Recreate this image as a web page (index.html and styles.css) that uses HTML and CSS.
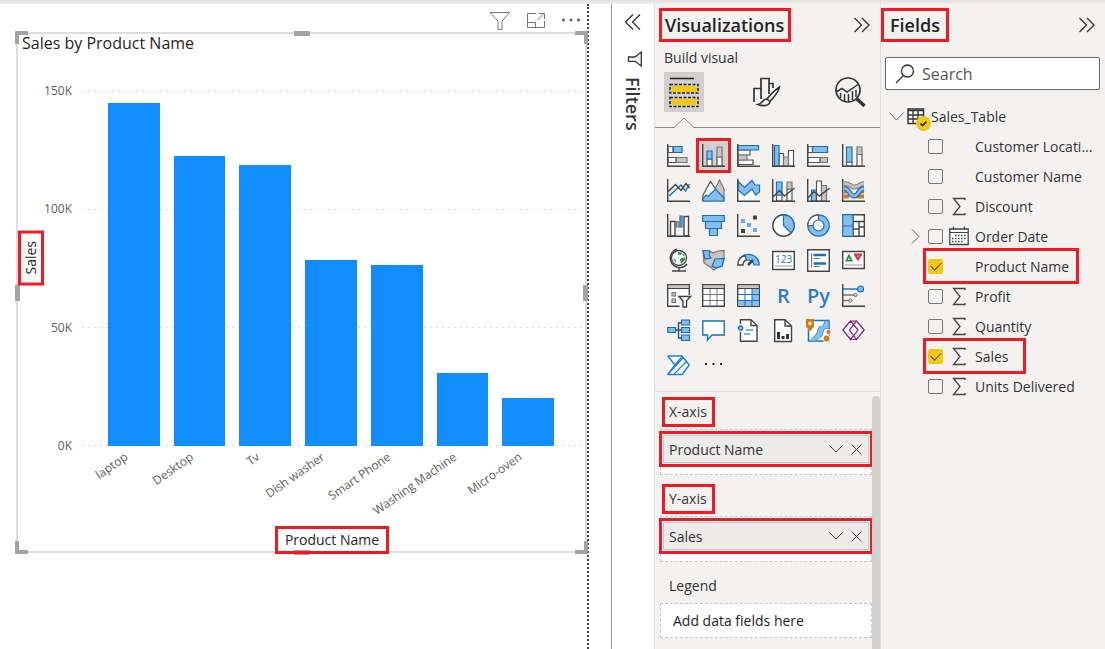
FILE: index.html
```html
<!DOCTYPE html>
<html lang="en">
<head>
    <meta charset="UTF-8">
    <meta name="viewport" content="width=device-width, initial-scale=1.0">
    <title>Sales by Product Name</title>
    <link rel="stylesheet" href="styles.css">
</head>
<body>

    <div class="ribbon-edge"></div>

    <div class="workspace">

        <!-- report canvas -->
        <main class="canvas">
            <div class="report-page">
                <div class="visual-header">
                    <button type="button" aria-label="Filters"><svg width="22" height="20" viewBox="0 0 22 20"><path d="M1 1.500H20.500L13 10V18.500H9V10Z" fill="none" stroke="#777"/></svg></button>
                    <button type="button" aria-label="Focus mode"><svg width="20" height="20" viewBox="0 0 20 20"><path d="M10 2.500H1.500V16.500H18.500V10M1.500 11.500H9.500V16.500M11.500 9L18 2.500M12.500 2.500H18.500V8" fill="none" stroke="#777"/></svg></button>
                    <button type="button" aria-label="More options"><svg width="20" height="20" viewBox="0 0 20 20"><g fill="#666"><circle cx="2.500" cy="9" r="1.600"/><circle cx="10" cy="9" r="1.600"/><circle cx="17.500" cy="9" r="1.600"/></g></svg></button>
                </div>

                <section class="visual">
                    <h2 class="visual-title">Sales by Product Name</h2>
                    <span class="handle tl"></span><span class="handle tc"></span><span class="handle tr"></span>
                    <span class="handle ml"></span><span class="handle mr"></span>
                    <span class="handle bl"></span><span class="handle bc"></span><span class="handle br"></span>
                    <div class="chart">
                        <div class="y-title"><span class="marked">Sales</span></div>
                        <div class="y-ticks">
                            <span>150K</span>
                            <span>100K</span>
                            <span>50K</span>
                            <span>0K</span>
                        </div>
                        <div class="plot">
                            <div class="gridlines"><i></i><i></i><i></i><i></i></div>
                            <div class="bars">
                                <div class="col"><div class="bar" style="height: 96.6%"></div><span class="label">laptop</span></div>
                                <div class="col"><div class="bar" style="height: 81.7%"></div><span class="label">Desktop</span></div>
                                <div class="col"><div class="bar" style="height: 79.2%"></div><span class="label">Tv</span></div>
                                <div class="col"><div class="bar" style="height: 52.3%"></div><span class="label">Dish washer</span></div>
                                <div class="col"><div class="bar" style="height: 50.9%"></div><span class="label">Smart Phone</span></div>
                                <div class="col"><div class="bar" style="height: 20.5%"></div><span class="label">Washing Machine</span></div>
                                <div class="col"><div class="bar" style="height: 13.5%"></div><span class="label">Micro-oven</span></div>
                            </div>
                        </div>
                        <div class="x-title"><span class="marked">Product Name</span></div>
                    </div>
                </section>
            </div>
        </main>

        <!-- collapsed filters pane -->
        <aside class="filters">
            <button type="button" aria-label="Expand filters"><svg width="18" height="18" viewBox="0 0 18 18"><path d="M9 1.500L1.500 9L9 16.500M16 1.500L8.500 9L16 16.500" fill="none" stroke="#333" stroke-width="1.300"/></svg></button>
            <svg class="funnel" width="16" height="16" viewBox="0 0 16 16"><path d="M14.300 1V15L8 10.300H1.500V6H8Z" fill="none" stroke="#333" stroke-width="1.300"/></svg>
            <span class="filters-title">Filters</span>
        </aside>

        <!-- visualizations pane -->
        <aside class="pane viz">
            <header class="pane-header">
                <h1 class="marked">Visualizations</h1>
                <button type="button" aria-label="Collapse visualizations"><svg width="18" height="16" viewBox="0 0 18 16"><path d="M1.500 1L8.500 8L1.500 15M9 1L16 8L9 15" fill="none" stroke="#333" stroke-width="1.300"/></svg></button>
            </header>
            <p class="subtitle">Build visual</p>
            <div class="tabs">
                <button type="button" class="tab active" aria-label="Build visual">
                    <svg width="32" height="32" viewBox="0 0 32 32"><path d="M2 2.500H26" stroke="#222" stroke-width="1.500"/><path fill="#f2c811" d="M3.500 10H28.500V16H3.500ZM3.500 23H28.500V29H3.500Z"/><path d="M2 8.500H30V17H2ZM2 21.500H30V30.500H2Z" fill="none" stroke="#222" stroke-width="1.500" stroke-dasharray="3 1.500"/></svg>
                </button>
                <button type="button" class="tab" aria-label="Format visual">
                    <svg width="32" height="32" viewBox="0 0 32 32"><path d="M3 26V12.500H10V23M10 12.500V2.500H18V18M18 7.500H22V12" fill="none" stroke="#333" stroke-width="1.700"/><path d="M28.500 11C25 13 18 20 16 23L19 25.500C22 22.500 28 15 28.500 11ZM16 23C12 22.500 12.500 27 7 28.500C12 30.500 18.500 30 19 25.500" fill="#f3f2f1" stroke="#333" stroke-width="1.600"/></svg>
                </button>
                <button type="button" class="tab" aria-label="Analytics">
                    <svg width="34" height="32" viewBox="0 0 34 32"><circle cx="15" cy="14" r="12" fill="none" stroke="#333" stroke-width="1.700"/><path d="M3 16L9 12.500L14 16L25 8.500M7.500 17V22M11.500 18V25M15.500 18V26M19.500 15V24.500M23 14V21" fill="none" stroke="#333" stroke-width="1.500"/><path d="M23.500 22.500L31.500 30" stroke="#333" stroke-width="3.500"/></svg>
                </button>
            </div>
            <div class="tab-line"><svg width="24" height="12" viewBox="0 0 24 12"><path d="M1 10.500H2L12 1L22 10.500H23" fill="#f3f2f1" stroke="#888"/><path d="M3 11H21" stroke="#f3f2f1" stroke-width="2"/></svg></div>

            <div class="gallery">
                <button type="button" aria-label="Stacked bar chart"><svg viewBox="0 0 23 23"><path class="w" d="M1 2.500H6V8.500H1ZM1 13.500H9V18.500H1Z"/><path class="b" d="M6.500 2.500H15V8.500H6.500Z"/><path class="g" d="M9.500 13.500H20V18.500H9.500Z"/><path class="k" d="M.7 0V22.300H23"/></svg></button>
                <button type="button" class="marked picked" aria-label="Stacked column chart"><svg viewBox="0 0 23 23"><path class="w" d="M5 15H10V22H5ZM15 13H20V22H15Z"/><path class="b" d="M5 7H10V15H5Z"/><path class="g" d="M15 3H20V13H15Z"/><path class="k" d="M.7 0V22.300H23"/></svg></button>
                <button type="button" aria-label="Clustered bar chart"><svg viewBox="0 0 23 23"><path class="w" d="M1 6H13V11H1ZM1 16H16V20.500H1Z"/><path class="g" d="M1 11H10V16H1Z"/><path class="b" d="M1 1.500H21.500V6H1Z"/><path class="k" d="M.7 0V22.300H23"/></svg></button>
                <button type="button" aria-label="Clustered column chart"><svg viewBox="0 0 23 23"><path class="w" d="M7 9.500H11.500V22H7ZM16.500 6.500H21.500V22H16.500Z"/><path class="g" d="M11.500 13H16.500V22H11.500Z"/><path class="b" d="M2.500 1.500H7V22H2.500Z"/><path class="k" d="M.7 0V22.300H23"/></svg></button>
                <button type="button" aria-label="100% stacked bar chart"><svg viewBox="0 0 23 23"><path class="w" d="M1 2.500H5.500V8.500H1ZM1 13.500H13V18.500H1Z"/><path class="b" d="M5.500 2.500H20.500V8.500H5.500Z"/><path class="g" d="M13.500 13.500H20.500V18.500H13.500Z"/><path class="k" d="M.7 0V22.300H23"/></svg></button>
                <button type="button" aria-label="100% stacked column chart"><svg viewBox="0 0 23 23"><path class="w" d="M4.500 18H10V22H4.500ZM15 10.500H20V22H15Z"/><path class="b" d="M4.500 3H10V18H4.500Z"/><path class="g" d="M15 3H20V10.500H15Z"/><path class="k" d="M.7 0V22.300H23"/></svg></button>

                <button type="button" aria-label="Line chart"><svg viewBox="0 0 23 23"><path class="bl" d="M2 17L14 6L18.500 12L22.500 5"/><path class="kl" d="M1 12.500L8.500 5.500L14 11.500L19 4.500L22.500 9"/><path class="k" d="M.7 0V22.300H23"/></svg></button>
                <button type="button" aria-label="Area chart"><svg viewBox="0 0 23 23"><path class="g" d="M12 12L17.500 1L22 10V22H12Z"/><path class="w" d="M1 16L8.500 2.500L15 12L10 22H1Z"/><path class="b" d="M1 22V19.500L4 16L6 17.500L13.500 10L22 19V22Z"/></svg></button>
                <button type="button" aria-label="Stacked area chart"><svg viewBox="0 0 23 23"><path fill="#fff" d="M1 10L7 16L15 10L22 15V22H1Z"/><path class="b" d="M1 2.500L7.500 8.500L15 1.500L18 6H22.500V13L18.500 16L15 10L7.500 16.500L1 11Z"/><path class="k" d="M.7 0V22.300H23"/></svg></button>
                <button type="button" aria-label="Line and stacked column chart"><svg viewBox="0 0 23 23"><path class="w" d="M4.500 16H10V22H4.500ZM15 10H20V22H15Z"/><path class="b" d="M4.500 3H10V16H4.500Z"/><path class="g" d="M15 3H20V10H15Z"/><path class="kl" d="M1 18L7.500 11.500L12.500 17L22.500 9"/><path class="k" d="M.7 0V22.300H23"/></svg></button>
                <button type="button" aria-label="Line and clustered column chart"><svg viewBox="0 0 23 23"><path class="b" d="M4.500 11H9.500V22H4.500Z"/><path class="w" d="M9.500 2H14.500V22H9.500Z"/><path class="g" d="M14.500 6.500H19.500V22H14.500Z"/><path class="kl" d="M1 19L7 12.500L12.500 17L22.500 9"/><path class="k" d="M.7 0V22.300H23"/></svg></button>
                <button type="button" aria-label="Ribbon chart"><svg viewBox="0 0 23 23"><path d="M2 12.500H7M15 17.500H22M2 17.500H7M15 12.500H22" fill="none" stroke="#d07a1a" stroke-width="4"/><path d="M2 4.500C9 4.500 8 8.500 13 8S18 4.500 22 4.500" fill="none" stroke="#8a8a8a" stroke-width="5"/><path d="M2 4.500C9 4.500 8 8.500 13 8S18 4.500 22 4.500" fill="none" stroke="#c8c6c4" stroke-width="2.500"/><path d="M2 9.500C8 9.500 7 17 12 17S16 10 22 9.500" fill="none" stroke="#1b6fb8" stroke-width="5"/><path d="M2 9.500C8 9.500 7 17 12 17S16 10 22 9.500" fill="none" stroke="#83beec" stroke-width="2.500"/><path class="k" d="M.7 0V22.300H23"/></svg></button>

                <button type="button" aria-label="Waterfall chart"><svg viewBox="0 0 23 23"><path class="w kk" d="M3.500 7.500H8V22H3.500ZM17 2.500H21.500V22H17Z"/><path class="g" d="M9.500 7.500H12V13H9.500Z"/><path class="b" d="M13 2H15V13H13Z"/><path class="k" d="M.7 0V22.300H23"/></svg></button>
                <button type="button" aria-label="Funnel chart"><svg viewBox="0 0 23 23"><path class="b" d="M.7 1.500H22.300V7.500H.7ZM3.500 7.500H19.500V14.500H3.500ZM7.500 14.500H15.500V21.500H7.500Z"/></svg></button>
                <button type="button" aria-label="Scatter chart"><svg viewBox="0 0 23 23"><path fill="#6aade4" d="M4 5H8V9H4ZM10 9H14V13H10ZM16 14H20V18H16Z"/><path fill="#444" d="M16 1.500H20V5.500H16ZM4 15H8V19H4Z"/><path class="k" d="M.7 0V22.300H23"/></svg></button>
                <button type="button" aria-label="Pie chart"><svg viewBox="0 0 23 23"><circle class="w kk" cx="11.500" cy="11.500" r="10.700"/><path class="b" d="M11.500 11.500V.8A10.700 10.700 0 0 1 19 19Z"/></svg></button>
                <button type="button" aria-label="Donut chart"><svg viewBox="0 0 23 23"><circle class="b" cx="11.500" cy="11.500" r="10.700"/><path class="w" d="M11.500 11.500V.8A10.700 10.700 0 0 0 .8 11.500Z"/><circle cx="11.500" cy="11.500" r="5.500" fill="#f3f2f1" stroke="#1b6fb8" stroke-width="1.200"/></svg></button>
                <button type="button" aria-label="Treemap"><svg viewBox="0 0 23 23"><path class="w kk" d="M11 .7H22.300V22.300H11ZM11 7.500H22M11 15H17M17 7.500V22M17 13H22"/><path class="b" d="M.7 .7H11V12H.7ZM.7 12H11V22.300H.7Z"/></svg></button>

                <button type="button" aria-label="Map"><svg viewBox="0 0 23 23"><circle cx="12" cy="9" r="7.500" fill="#fff" stroke="#444" stroke-width="1.300"/><path fill="#2e8b4a" d="M11 3L15 3.500L14 6L11 5.500ZM13 10L17.500 8L18 11L14 15ZM15.500 4L18 6L16 7ZM6 9L9 11L9 14Z"/><path class="kl" d="M10 0A9.500 9.500 0 0 0 14 18.500Q18 18 20 15M12 18V22M5 22H19"/></svg></button>
                <button type="button" aria-label="Filled map"><svg viewBox="0 0 23 23"><path class="g" d="M1 1.500L8 2L11 4L16 2L22 1.500L22 10L20 17L14 19L12 21L8 18L2 14Z"/><path class="b" d="M1 1.500L8 2L7 6L9 9L3 10ZM13 10L22 9.500L20 17L14 19L10 17Z"/></svg></button>
                <button type="button" aria-label="Gauge"><svg viewBox="0 0 23 23"><path class="w kk" d="M.8 16A10.700 10.700 0 0 1 8 6L9.500 11Q6 12 6 16Z"/><path class="b" d="M8 6A10.700 10.700 0 0 1 22.300 16H17Q16 11 9.500 11Z"/><path d="M11 16L16 11" stroke="#444" stroke-width="2.500"/></svg></button>
                <button type="button" aria-label="Card"><svg viewBox="0 0 23 23"><path class="w kk" d="M.7 2.500H22.300V20.500H.7Z"/><text x="3" y="14" class="digits">123</text><path d="M3 17H20" stroke="#999"/></svg></button>
                <button type="button" aria-label="Multi-row card"><svg viewBox="0 0 23 23"><path class="w kk" d="M.7 .7H22.300V22.300H.7Z"/><path d="M6.500 6H19M6.500 14.500H19" stroke="#1b6fb8" stroke-width="2.500"/><path d="M4.500 4V18.500M6.500 9.500H13M6.500 17.500H13" stroke="#777"/></svg></button>
                <button type="button" aria-label="KPI"><svg viewBox="0 0 23 23"><path class="w kk" d="M.7 2.500H22.300V19.500H.7Z"/><path fill="#2e8b4a" d="M3 12.500L7 4.500L11 12.500Z"/><path fill="#d9303a" d="M11.500 4.500H20.500L16 12.500Z"/><path fill="#fff" d="M6 11L7 8.500L8 11ZM15 6.500H17L16 8.500Z"/><path d="M3 16H20" stroke="#999"/></svg></button>

                <button type="button" aria-label="Slicer"><svg viewBox="0 0 23 23"><path class="w kk" d="M.7 .7H22.300V22.300H.7Z"/><path fill="#c8c6c4" stroke="#444" d="M.7 .7H22.300V4.500H.7Z"/><path class="g" d="M5 8.500H8.500V12H5ZM5 15H8.500V18.500H5Z"/><path d="M10 11H24V24H13Z" fill="#f3f2f1"/><path class="w kk" d="M12 12.500H23.500L19.500 17V23H16V17Z"/></svg></button>
                <button type="button" aria-label="Table"><svg viewBox="0 0 23 23"><path class="w kk" d="M.7 .7H22.300V22.300H.7Z"/><path fill="none" stroke="#777" d="M1 10.500H22M1 16.500H22M8 5V22M15 5V22"/><path fill="#c8c6c4" stroke="#444" d="M.7 .7H22.300V4.500H.7Z"/></svg></button>
                <button type="button" aria-label="Matrix"><svg viewBox="0 0 23 23"><path class="w kk" d="M.7 .7H22.300V22.300H.7Z"/><path fill="#83beec" d="M15 5H22V22H1V16.500H15Z"/><path fill="none" stroke="#1b6fb8" d="M1 10.500H22M1 16.500H22M8 5V22M15 5V22"/><path fill="#c8c6c4" stroke="#444" d="M.7 .7H22.300V4.500H.7Z"/></svg></button>
                <button type="button" class="script" aria-label="R script visual">R</button>
                <button type="button" class="script" aria-label="Python visual">Py</button>
                <button type="button" aria-label="Key influencers"><svg viewBox="0 0 23 23"><path class="bl" d="M1 5H15"/><circle class="b" cx="18.500" cy="5" r="3"/><path d="M1 11H12M1 16.500H7" stroke="#777" stroke-width="1.300"/><circle cx="13.500" cy="11" r="1.600" fill="#ccc" stroke="#777"/><circle cx="8.500" cy="16.500" r="1.600" fill="#ccc" stroke="#777"/><path class="k" d="M.7 0V22.300H23"/></svg></button>

                <button type="button" aria-label="Decomposition tree"><svg viewBox="0 0 23 23"><path class="kl" d="M9 11H14M14 4H11.500V19H14"/><path class="b" d="M.7 8.500H8.500V13.500H.7ZM14.500 1H22.500V6H14.500ZM14.500 8.500H22.500V13.500H14.500ZM14.500 16H22.500V21.500H14.500Z"/></svg></button>
                <button type="button" aria-label="Q&amp;A"><svg viewBox="0 0 23 23"><path d="M.8 2H22.200V16H10L5.500 21V16H.8Z" fill="#fff" stroke="#1b6fb8" stroke-width="1.400"/></svg></button>
                <button type="button" aria-label="Smart narrative"><svg viewBox="0 0 23 23"><path class="w kk" d="M3.500 .7H14L20 6.500V22.300H3.500Z"/><path class="kl" d="M14 1V6.500H20"/><circle cx="3.500" cy="9" r="4" fill="#f3f2f1"/><circle class="b" cx="3.500" cy="9" r="2.200"/><path d="M9 11H16M7 15H13" stroke="#4a98da" stroke-width="1.500"/></svg></button>
                <button type="button" aria-label="Paginated report"><svg viewBox="0 0 23 23"><path class="w kk" d="M2.700 .7H13L19.500 7V22.500H2.700Z"/><path class="kl" d="M13 1V7H19.500"/><path fill="#333" d="M5 13H8V20H5ZM9.500 17H12.500V20H9.500ZM14 15H17V20H14Z"/></svg></button>
                <button type="button" aria-label="ArcGIS map"><svg viewBox="0 0 23 23"><path d="M1.500 1.500H22V22H1.500Z" fill="#fff" stroke="#1b6fb8" stroke-width="1.500"/><path fill="#83beec" stroke="#4a98da" d="M18 2H22V9L17 10L15 17L8 22H3L10 14L12 8L16 7Z"/><path d="M-1 -1H7V6L4 13L-1 9Z" fill="#f3f2f1"/><path fill="#d07a1a" d="M-1 0H7V7.500L3 12.500L-1 7.500Z"/><circle cx="3" cy="4.500" r="1.700" fill="#fff"/><circle cx="19.500" cy="19.500" r="3.500" fill="#d07a1a" stroke="#f3f2f1"/><circle cx="21.500" cy="13" r="2.500" fill="#d07a1a" stroke="#f3f2f1"/></svg></button>
                <button type="button" aria-label="Power Apps"><svg viewBox="0 0 23 23"><path d="M8.500 2L.8 11L8.500 20.500L16 11ZM14.500 2L22.200 11L14.500 20.500L7.500 11ZM8.500 2H14.500M8.500 20.500H14.500" fill="none" stroke="#742774" stroke-width="1.200"/></svg></button>

                <button type="button" aria-label="Power Automate"><svg viewBox="0 0 23 23"><path d="M.8 2H15L22.200 11L15 20.500H.8L8 11Z" fill="#fff" stroke="#1b80e0" stroke-width="1.400" stroke-linejoin="round"/><path d="M8 11L15 2.500M1 20L16 4M7 20L19.500 7.500" fill="none" stroke="#1b80e0" stroke-width="1.200"/></svg></button>
                <button type="button" aria-label="Get more visuals"><svg viewBox="0 0 23 23"><path fill="#222" d="M3 9H5V11H3ZM10.500 9H12.500V11H10.500ZM18 9H20V11H18Z"/></svg></button>
            </div>

            <div class="wells-scroll">
                <div class="wells">
                    <h3><span class="marked">X-axis</span></h3>
                    <div class="well">
                        <div class="pill marked">
                            <span>Product Name</span>
                            <button type="button" aria-label="Product Name options"><svg width="14" height="8" viewBox="0 0 14 8"><path d="M.5 .5L7 7L13.500 .5" fill="none" stroke="#444"/></svg></button>
                            <button type="button" aria-label="Remove Product Name"><svg width="11" height="11" viewBox="0 0 11 11"><path d="M.5 .5L10.500 10.500M10.500 .5L.5 10.500" stroke="#444"/></svg></button>
                        </div>
                    </div>
                    <h3><span class="marked">Y-axis</span></h3>
                    <div class="well">
                        <div class="pill marked">
                            <span>Sales</span>
                            <button type="button" aria-label="Sales options"><svg width="14" height="8" viewBox="0 0 14 8"><path d="M.5 .5L7 7L13.500 .5" fill="none" stroke="#444"/></svg></button>
                            <button type="button" aria-label="Remove Sales"><svg width="11" height="11" viewBox="0 0 11 11"><path d="M.5 .5L10.500 10.500M10.500 .5L.5 10.500" stroke="#444"/></svg></button>
                        </div>
                    </div>
                    <h3>Legend</h3>
                    <div class="well empty">Add data fields here</div>
                </div>
                <div class="thumb"></div>
            </div>
        </aside>

        <!-- fields pane -->
        <aside class="pane fields">
            <header class="pane-header">
                <h1 class="marked">Fields</h1>
                <button type="button" aria-label="Collapse fields"><svg width="18" height="16" viewBox="0 0 18 16"><path d="M1.500 1L8.500 8L1.500 15M9 1L16 8L9 15" fill="none" stroke="#333" stroke-width="1.300"/></svg></button>
            </header>
            <label class="search">
                <svg width="20" height="20" viewBox="0 0 20 20"><circle cx="12.500" cy="7" r="6" fill="none" stroke="#333" stroke-width="1.300"/><path d="M8.500 11.500L1 19" stroke="#333" stroke-width="1.300"/></svg>
                <input type="text" placeholder="Search" aria-label="Search">
            </label>

            <div class="table-row">
                <svg width="15" height="9" viewBox="0 0 15 9"><path d="M.5 .5L7.500 8L14.500 .5" fill="none" stroke="#666"/></svg>
                <svg class="table-icon" width="25" height="24" viewBox="0 0 25 24"><path d="M1 2H16.500V16.500H1Z" fill="#fff" stroke="#333" stroke-width="1.500"/><path d="M1 3.500H16.500M1 8H16.500M1 12H16.500M6 3V16M11 3V16" fill="none" stroke="#333" stroke-width="1.300"/><circle cx="16.500" cy="16.500" r="7.500" fill="#f2c811"/><path d="M13.500 16.500L15.500 18.500L19.500 14.500" fill="none" stroke="#222" stroke-width="1.700"/></svg>
                <span>Sales_Table</span>
            </div>
            <ul class="field-list">
                <li><label><input type="checkbox"><span class="icon"></span>Customer Locati...</label></li>
                <li><label><input type="checkbox"><span class="icon"></span>Customer Name</label></li>
                <li><label><input type="checkbox"><span class="icon"><svg width="14" height="19" viewBox="0 0 14 19"><path d="M13 3V1.500H1.500L8 9.500L1.500 17.500H13V16" fill="none" stroke="#444" stroke-width="1.300"/></svg></span>Discount</label></li>
                <li>
                    <svg class="expander" width="9" height="15" viewBox="0 0 9 15"><path d="M1 .5L8 7.500L1 14.500" fill="none" stroke="#666"/></svg>
                    <label><input type="checkbox"><span class="icon"><svg width="20" height="20" viewBox="0 0 20 20"><path d="M.8 3H19.200V18.500H.8Z" fill="#fff" stroke="#444" stroke-width="1.300"/><path d="M1 6.500H19M4.500 .5V4M15.500 .5V4" stroke="#444" stroke-width="1.200"/><path d="M6 9.500H17M3 12.500H17M3 15.500H14" stroke="#444" stroke-width="1.500" stroke-dasharray="1.500 1.500"/></svg></span>Order Date</label>
                </li>
                <li><label class="marked"><input type="checkbox" checked><span class="icon"></span>Product Name</label></li>
                <li><label><input type="checkbox"><span class="icon"><svg width="14" height="19" viewBox="0 0 14 19"><path d="M13 3V1.500H1.500L8 9.500L1.500 17.500H13V16" fill="none" stroke="#444" stroke-width="1.300"/></svg></span>Profit</label></li>
                <li><label><input type="checkbox"><span class="icon"><svg width="14" height="19" viewBox="0 0 14 19"><path d="M13 3V1.500H1.500L8 9.500L1.500 17.500H13V16" fill="none" stroke="#444" stroke-width="1.300"/></svg></span>Quantity</label></li>
                <li><label class="marked"><input type="checkbox" checked><span class="icon"><svg width="14" height="19" viewBox="0 0 14 19"><path d="M13 3V1.500H1.500L8 9.500L1.500 17.500H13V16" fill="none" stroke="#444" stroke-width="1.300"/></svg></span>Sales</label></li>
                <li><label><input type="checkbox"><span class="icon"><svg width="14" height="19" viewBox="0 0 14 19"><path d="M13 3V1.500H1.500L8 9.500L1.500 17.500H13V16" fill="none" stroke="#444" stroke-width="1.300"/></svg></span>Units Delivered</label></li>
            </ul>
        </aside>

    </div>

</body>
</html>
```
FILE: styles.css
```css
* {
    box-sizing: border-box;
    margin: 0;
    padding: 0;
}

body {
    font-family: "Open Sans", "Noto Sans", sans-serif;
    font-size: 14px;
    color: #333;
    background: #fff;
    min-height: 100vh;
    display: flex;
    flex-direction: column;
}

button {
    border: none;
    background: none;
    font: inherit;
    color: inherit;
    cursor: pointer;
}

svg {
    display: block;
    overflow: visible;
}

.ribbon-edge {
    height: 4px;
    background: linear-gradient(#e1dfdd, #f1f0ef);
}

.workspace {
    flex: 1;
    display: flex;
}

.marked {
    outline: 3px solid #ed1c24;
}

/* canvas */
.canvas {
    flex: 1;
    min-width: 0;
    padding-right: 22px;
    border-right: 1px solid #999;
    display: flex;
}

.report-page {
    flex: 1;
    padding-left: 16px;
    border-right: 2px dotted #444;
}

.visual-header {
    display: flex;
    justify-content: flex-end;
    gap: 15px;
    height: 28px;
    padding: 6px 6px 0 0;
}

.visual {
    position: relative;
    border: 2px solid #ddd;
}

.visual-title {
    font-size: 16px;
    font-weight: normal;
    line-height: 18px;
    color: #252423;
    padding-left: 4px;
}

.chart {
    display: grid;
    grid-template-columns: 26px 28px 1fr;
    grid-template-rows: 355px auto;
    padding: 39px 3px 0 0;
}

.y-title {
    display: flex;
    align-items: center;
    justify-content: center;
    color: #252423;
}

.y-title span {
    writing-mode: vertical-rl;
    transform: rotate(180deg);
    padding: 8px 0 7px;
    line-height: 20px;
    margin-bottom: 20px;
}

.y-ticks {
    display: flex;
    flex-direction: column;
    justify-content: space-between;
    text-align: right;
    font-size: 12px;
    line-height: 16px;
    margin: -8px 0;
    color: #605e5c;
}

.plot {
    position: relative;
    margin-left: 10px;
}

.gridlines {
    position: absolute;
    inset: 0;
    display: flex;
    flex-direction: column;
    justify-content: space-between;
}

.gridlines i {
    height: 1px;
    background: repeating-linear-gradient(to right, #d8d8d8 0 2px, transparent 2px 6px);
}

.bars {
    position: relative;
    height: 100%;
    display: flex;
    gap: 14px;
    padding: 0 28px 0 26px;
}

.col {
    position: relative;
    flex: 1;
    display: flex;
    align-items: flex-end;
}

.bar {
    width: 100%;
    background: #118dff;
}

.label {
    position: absolute;
    top: 100%;
    right: 50%;
    margin: 3px 12px 0 0;
    font-size: 12px;
    line-height: 16px;
    white-space: nowrap;
    color: #605e5c;
    transform: rotate(-35deg);
    transform-origin: top right;
}

.x-title {
    grid-column: 3;
    margin: 83px 0 0 10px;
    text-align: center;
    color: #252423;
}

.x-title span {
    display: inline-block;
    position: relative;
    padding: 0 7px;
    line-height: 22px;
}

.handle {
    position: absolute;
    border: 0 solid #a3a3a3;
}

.tl, .tr, .bl, .br {
    width: 13px;
    height: 13px;
}

.tl { top: -3px; left: -3px; border-width: 4px 0 0 4px; }
.tr { top: -3px; right: -3px; border-width: 4px 4px 0 0; }
.bl { bottom: -3px; left: -3px; border-width: 0 0 4px 4px; }
.br { bottom: -3px; right: -3px; border-width: 0 4px 4px 0; }

.tc, .bc {
    left: 50%;
    width: 16px;
    margin-left: -8px;
    border-top-width: 5px;
}

.tc { top: -3px; }
.bc { bottom: -4px; }

.ml, .mr {
    top: 50%;
    height: 16px;
    margin-top: -8px;
    border-left-width: 5px;
}

.ml { left: -3px; }
.mr { right: -3px; }

/* filters */
.filters {
    width: 42px;
    display: flex;
    flex-direction: column;
    align-items: center;
    padding-top: 9px;
}

.funnel {
    margin: 20px 0 8px 4px;
}

.filters-title {
    writing-mode: vertical-rl;
    font-size: 18px;
    font-weight: 600;
    line-height: 24px;
    padding-top: 2px;
}

/* side panes */
.pane {
    width: 226px;
    background: #f3f2f1;
    border-left: 1px solid #ddd;
}

.pane-header {
    display: flex;
    justify-content: space-between;
    align-items: center;
    height: 42px;
    padding: 0 9px 0 7px;
}

.pane-header h1 {
    font-size: 18px;
    font-weight: 600;
    line-height: 28px;
    padding: 0 4px 0 3px;
    color: #252423;
}

.pane.fields {
    width: 225px;
}

.fields .pane-header {
    padding-left: 3px;
}

.fields .pane-header h1 {
    padding: 0 6px;
}

.subtitle {
    line-height: 20px;
    padding: 2px 9px 4px;
    font-weight: 500;
}

.tabs {
    display: flex;
    justify-content: space-between;
    padding: 0 10px 0 9px;
}

.tab {
    width: 40px;
    height: 40px;
    display: flex;
    align-items: center;
    justify-content: center;
}

.tab.active {
    background: #d2d0ce;
}

.tab-line {
    height: 16px;
    padding: 5px 0 0 17px;
    border-bottom: 1px solid #888;
}

.gallery {
    display: grid;
    grid-template-columns: repeat(6, 29px);
    grid-auto-rows: 29px;
    gap: 6px;
    padding: 13px 9px 11px;
}

.gallery button {
    padding: 3px;
}

.gallery .picked {
    background: #d2d0ce;
}

.gallery .script {
    padding: 0;
    font-size: 20px;
    font-weight: 600;
    line-height: 26px;
    color: #2b7cc4;
}

.k, .kl {
    fill: none;
    stroke: #444;
    stroke-width: 1.4px;
}

.bl {
    fill: none;
    stroke: #1b6fb8;
    stroke-width: 1.4px;
}

.b {
    fill: #83beec;
    stroke: #1b6fb8;
    stroke-width: 1.2px;
}

.g {
    fill: #c8c6c4;
    stroke: #777;
    stroke-width: 1.2px;
}

.w {
    fill: #fff;
    stroke: #555;
    stroke-width: 1.2px;
}

.kk {
    stroke: #444;
    stroke-width: 1.4px;
}

/* the corner handle shares its name with the blue line icons */
.handle.bl {
    stroke: none;
}

.digits {
    font-size: 10px;
    fill: #2b7cc4;
}

/* field wells */
.wells-scroll {
    display: flex;
    border-top: 1px solid #e1dfdd;
    padding-top: 4px;
}

.wells {
    flex: 1;
    padding: 6px 0 0 5px;
}

.wells h3 {
    font-size: 14px;
    font-weight: normal;
    line-height: 20px;
    padding: 0 9px;
    margin-bottom: 7px;
}

.wells h3 span {
    display: inline-block;
    line-height: 24px;
    margin: -2px 0 -2px -4px;
    padding: 0 5px 0 4px;
}

.well {
    height: 46px;
    margin-bottom: 14px;
    padding: 5px 2px;
    background: #fff;
    border: 1px dashed #c8c6c4;
}

.well.empty {
    height: 35px;
    padding: 0 12px;
    line-height: 33px;
    color: #252423;
}

.pill {
    display: flex;
    align-items: center;
    gap: 8px;
    height: 28px;
    padding: 0 6px 0 5px;
    background: #edebe9;
    border: 1px solid #c8c6c4;
    outline-offset: 1px;
}

.pill span {
    flex: 1;
}

.thumb {
    width: 8px;
    background: #d2d0ce;
    border-radius: 4px 4px 0 0;
}

/* fields */
.search {
    display: flex;
    align-items: center;
    gap: 7px;
    height: 33px;
    margin: 11px 5px 11px 4px;
    padding: 0 9px;
    background: #fff;
    border: 1px solid #666;
    border-radius: 2px;
}

.search input {
    flex: 1;
    min-width: 0;
    border: none;
    outline: none;
    background: none;
    font: inherit;
    font-size: 16px;
}

.search input::placeholder {
    color: #555;
    opacity: 1;
}

.table-row {
    display: flex;
    align-items: center;
    height: 30px;
    padding-left: 8px;
}

.table-icon {
    margin: 6px -1px 0 3px;
}

.field-list {
    list-style: none;
}

.field-list li {
    position: relative;
    height: 30px;
    padding-left: 45px;
    white-space: nowrap;
}

.field-list label {
    display: inline-flex;
    align-items: center;
    height: 30px;
    padding: 0 7px 0 2px;
}

.field-list .marked {
    min-width: 97px;
}

.expander {
    position: absolute;
    left: 30px;
    top: 8px;
}

.field-list input {
    appearance: none;
    width: 15px;
    height: 15px;
    border: 1px solid #777;
    border-radius: 2px;
}

.field-list input:checked {
    border-color: #f2c811;
    background: #f2c811;
}

.field-list input:checked::after {
    content: "";
    display: block;
    width: 9px;
    height: 5px;
    margin: 2px;
    border: solid #5c4a00;
    border-width: 0 0 1px 1px;
    transform: rotate(-45deg);
}

.icon {
    width: 32px;
    display: flex;
    justify-content: center;
}
```
